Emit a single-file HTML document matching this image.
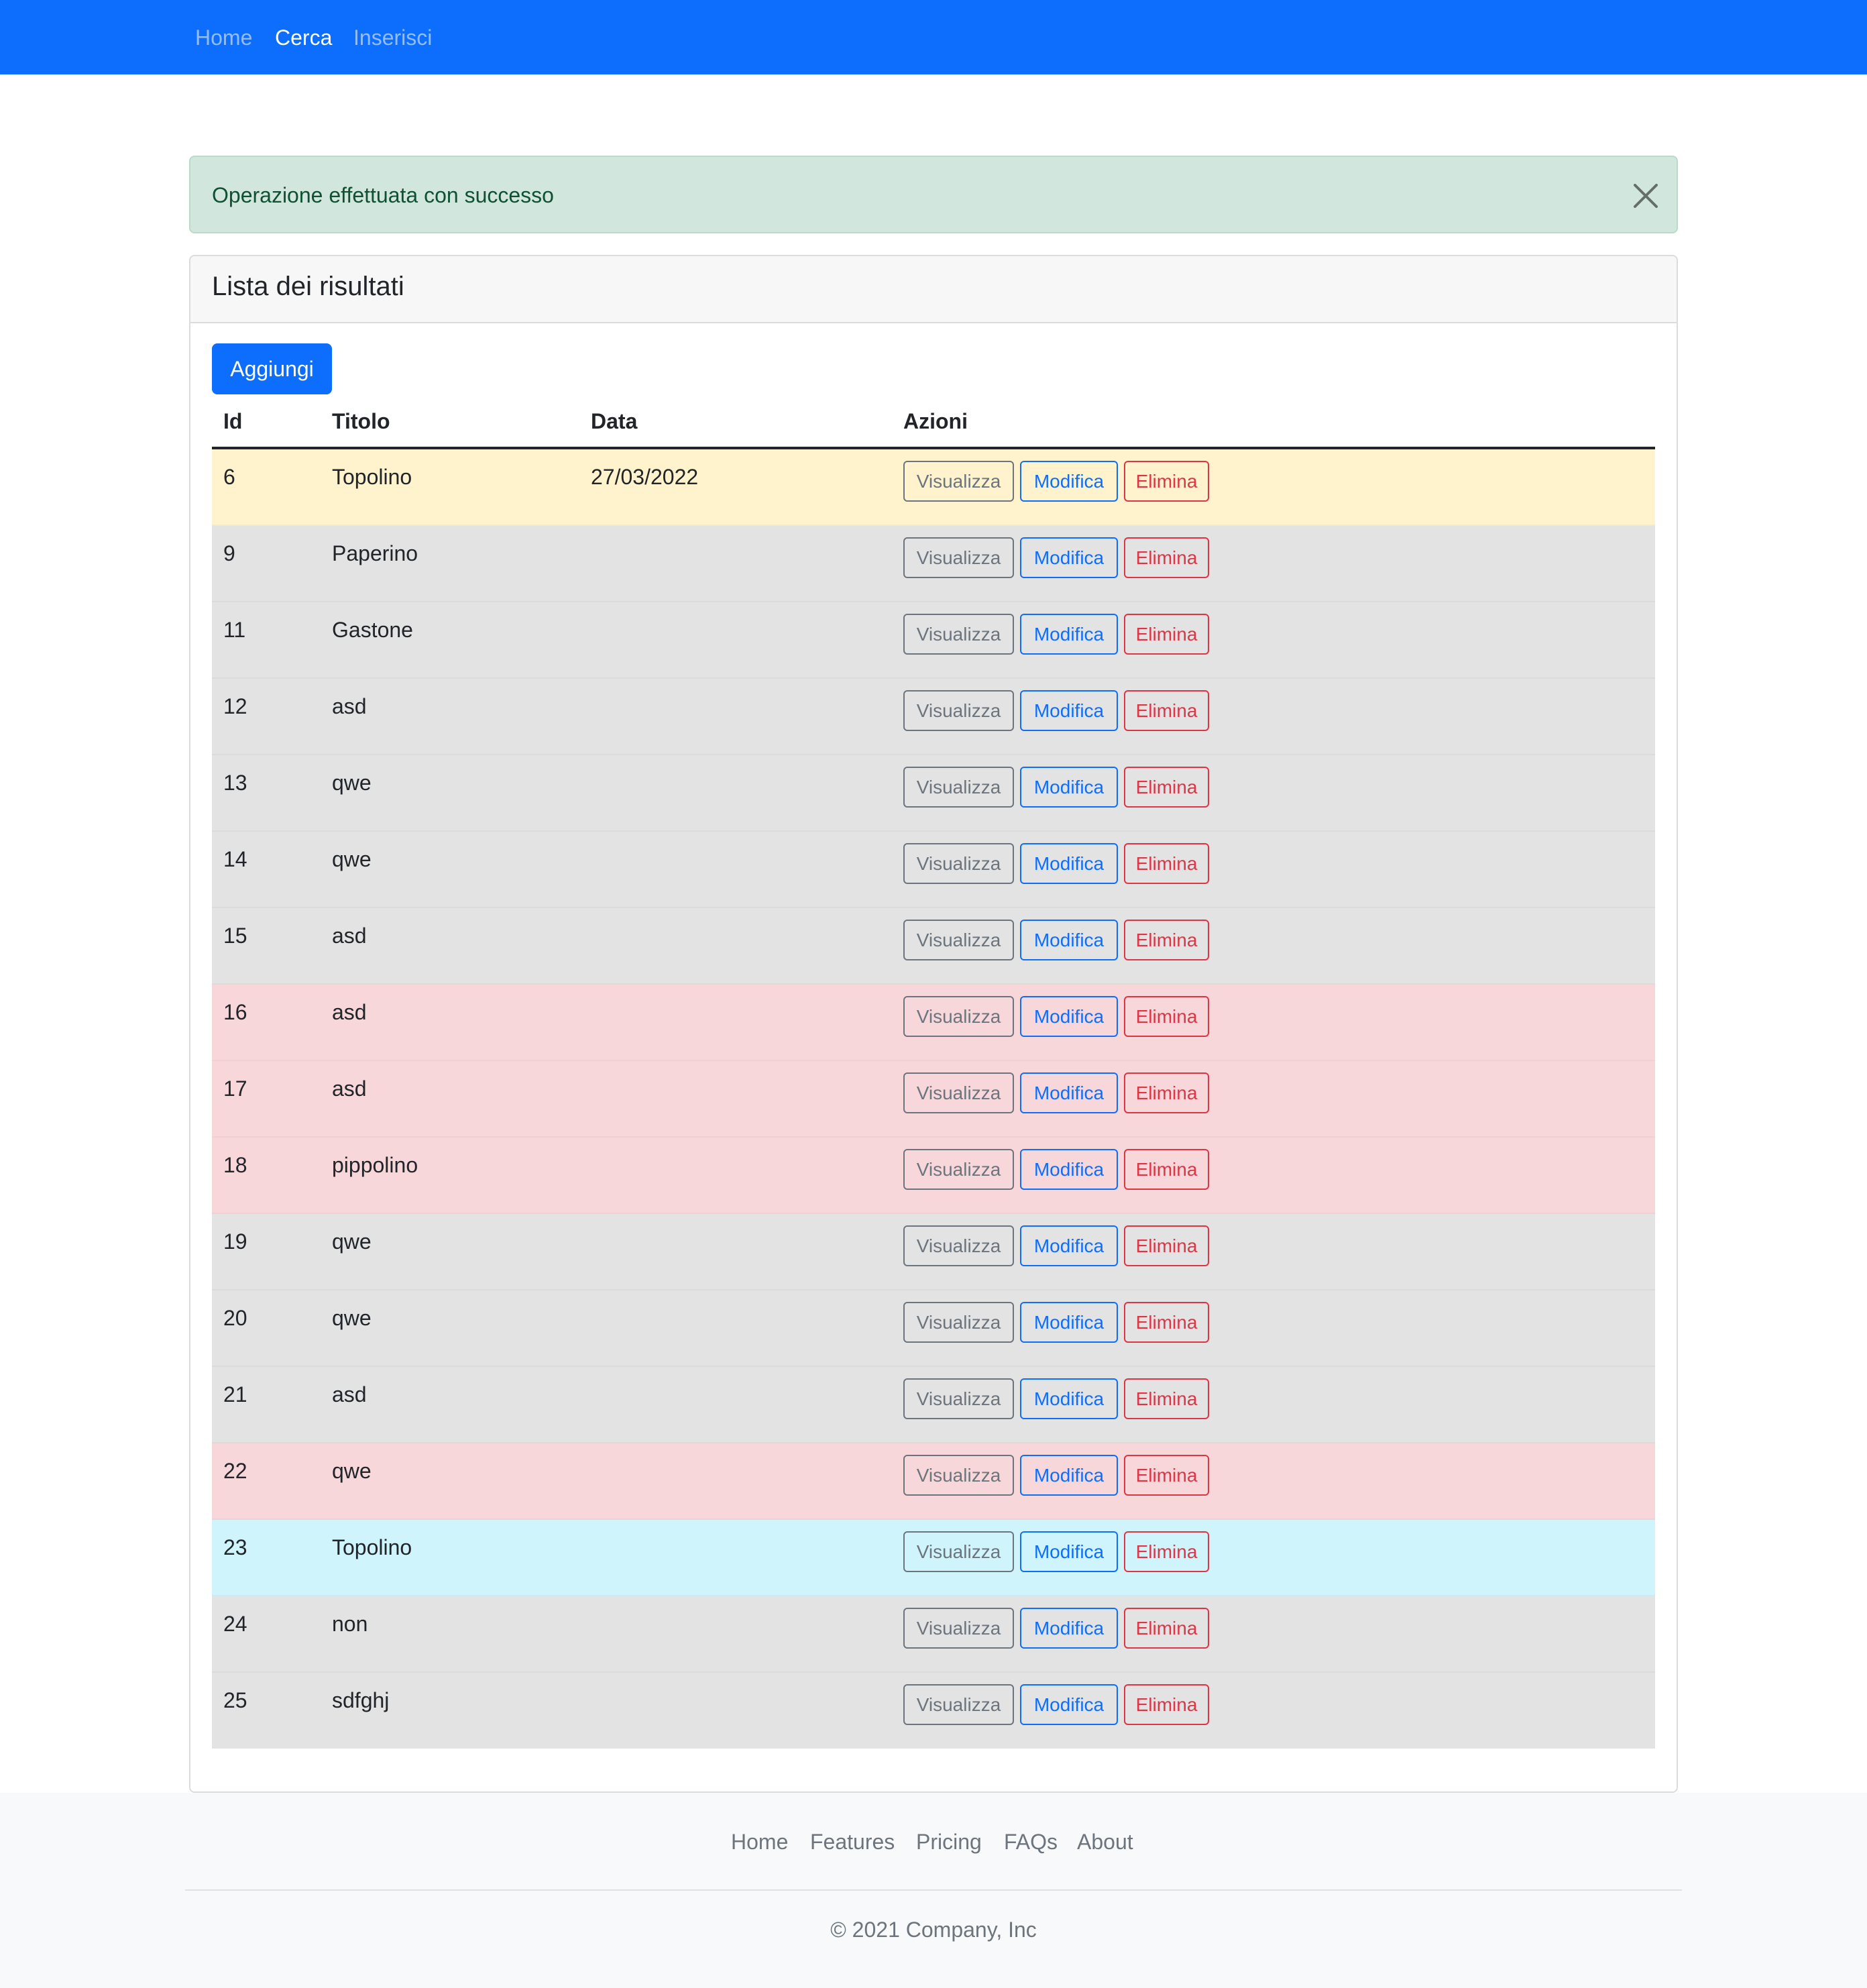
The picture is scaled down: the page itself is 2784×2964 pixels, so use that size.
<!DOCTYPE html>
<html><head><meta charset="utf-8">
<style>
*{box-sizing:border-box;margin:0;padding:0}
html,body{width:2784px;height:2964px;overflow:hidden;background:#fff;font-family:"Liberation Sans",sans-serif;color:#212529}
.nav{position:absolute;left:0;top:0;width:2784px;height:111px;background:#0d6efd}
.nav span{position:absolute;top:36px;font-size:32px;line-height:40px;color:rgba(255,255,255,.55)}
.alert{position:absolute;left:282px;top:232px;width:2220px;height:116px;background:#d1e7dd;border:2px solid #badbcc;border-radius:8px}
.alert .t{position:absolute;left:32px;top:37px;font-size:32px;line-height:40px;color:#0f5132}
.card{position:absolute;left:282px;top:380px;width:2220px;height:2293px;border:2px solid #dcdcdc;border-radius:8px;overflow:hidden}
.card .hd{position:absolute;left:0;top:0;width:100%;height:100px;background:#f7f7f7;border-bottom:2px solid #dcdcdc}
.card .hd div{position:absolute;left:32px;top:21px;font-size:40px;line-height:48px}
.add{position:absolute;left:316px;top:512px;width:179px;height:76px;background:#0d6efd;border-radius:8px;color:#fff;font-size:32px;line-height:76px;text-align:center}
.th{position:absolute;top:608px;font-size:32px;line-height:40px;font-weight:bold}
.hline{position:absolute;left:316px;top:666px;width:2152px;height:4px;background:#212529}
.row{position:absolute;left:316px;width:2152px;height:114px;border-bottom:2px solid rgba(0,0,0,.03)}
.row span{position:absolute;top:21px;font-size:32px;line-height:40px}
.b{position:absolute;top:17px;height:61px;border:2px solid;border-radius:6px;font-size:28px;line-height:57px;text-align:center}
.v{left:1031px;width:165px;border-color:#6c757d;color:#6c757d}
.m{left:1205px;width:146px;border-color:#0d6efd;color:#0d6efd}
.e{left:1360px;width:127px;border-color:#dc3545;color:#dc3545}
.w{background:#fff3cd}.g{background:#e3e3e3}.d{background:#f8d7da}.i{background:#cff4fc}
.foot{position:absolute;left:0;top:2673px;width:2784px;height:291px;background:#f8f9fa}
.fl{position:absolute;top:2726px;font-size:32px;line-height:40px;color:#6c757d}
.fline{position:absolute;left:276px;top:2817px;width:2232px;height:2px;background:#dee2e6}
.copy{position:absolute;left:0;width:2784px;top:2857px;text-align:center;font-size:32px;line-height:40px;color:#6c757d}
</style></head><body>
<div class="nav">
<span style="left:291px">Home</span>
<span style="left:410px;color:#fff">Cerca</span>
<span style="left:527px">Inserisci</span>
</div>
<div class="alert"><div class="t">Operazione effettuata con successo</div>
<svg style="position:absolute;left:2152px;top:40px" width="36" height="36" viewBox="0 0 36 36"><path d="M2 2L34 34M34 2L2 34" stroke="#646e6a" stroke-width="4" stroke-linecap="round"/></svg>
</div>
<div class="card"><div class="hd"><div>Lista dei risultati</div></div></div>
<div class="add">Aggiungi</div>
<div class="th" style="left:333px">Id</div>
<div class="th" style="left:495px">Titolo</div>
<div class="th" style="left:881px">Data</div>
<div class="th" style="left:1347px">Azioni</div>
<div class="hline"></div>

<div class="row w" style="top:670px"><span style="left:17px">6</span><span style="left:179px">Topolino</span><span style="left:565px">27/03/2022</span><div class="b v">Visualizza</div><div class="b m">Modifica</div><div class="b e">Elimina</div></div>
<div class="row g" style="top:784px"><span style="left:17px">9</span><span style="left:179px">Paperino</span><div class="b v">Visualizza</div><div class="b m">Modifica</div><div class="b e">Elimina</div></div>
<div class="row g" style="top:898px"><span style="left:17px">11</span><span style="left:179px">Gastone</span><div class="b v">Visualizza</div><div class="b m">Modifica</div><div class="b e">Elimina</div></div>
<div class="row g" style="top:1012px"><span style="left:17px">12</span><span style="left:179px">asd</span><div class="b v">Visualizza</div><div class="b m">Modifica</div><div class="b e">Elimina</div></div>
<div class="row g" style="top:1126px"><span style="left:17px">13</span><span style="left:179px">qwe</span><div class="b v">Visualizza</div><div class="b m">Modifica</div><div class="b e">Elimina</div></div>
<div class="row g" style="top:1240px"><span style="left:17px">14</span><span style="left:179px">qwe</span><div class="b v">Visualizza</div><div class="b m">Modifica</div><div class="b e">Elimina</div></div>
<div class="row g" style="top:1354px"><span style="left:17px">15</span><span style="left:179px">asd</span><div class="b v">Visualizza</div><div class="b m">Modifica</div><div class="b e">Elimina</div></div>
<div class="row d" style="top:1468px"><span style="left:17px">16</span><span style="left:179px">asd</span><div class="b v">Visualizza</div><div class="b m">Modifica</div><div class="b e">Elimina</div></div>
<div class="row d" style="top:1582px"><span style="left:17px">17</span><span style="left:179px">asd</span><div class="b v">Visualizza</div><div class="b m">Modifica</div><div class="b e">Elimina</div></div>
<div class="row d" style="top:1696px"><span style="left:17px">18</span><span style="left:179px">pippolino</span><div class="b v">Visualizza</div><div class="b m">Modifica</div><div class="b e">Elimina</div></div>
<div class="row g" style="top:1810px"><span style="left:17px">19</span><span style="left:179px">qwe</span><div class="b v">Visualizza</div><div class="b m">Modifica</div><div class="b e">Elimina</div></div>
<div class="row g" style="top:1924px"><span style="left:17px">20</span><span style="left:179px">qwe</span><div class="b v">Visualizza</div><div class="b m">Modifica</div><div class="b e">Elimina</div></div>
<div class="row g" style="top:2038px"><span style="left:17px">21</span><span style="left:179px">asd</span><div class="b v">Visualizza</div><div class="b m">Modifica</div><div class="b e">Elimina</div></div>
<div class="row d" style="top:2152px"><span style="left:17px">22</span><span style="left:179px">qwe</span><div class="b v">Visualizza</div><div class="b m">Modifica</div><div class="b e">Elimina</div></div>
<div class="row i" style="top:2266px"><span style="left:17px">23</span><span style="left:179px">Topolino</span><div class="b v">Visualizza</div><div class="b m">Modifica</div><div class="b e">Elimina</div></div>
<div class="row g" style="top:2380px"><span style="left:17px">24</span><span style="left:179px">non</span><div class="b v">Visualizza</div><div class="b m">Modifica</div><div class="b e">Elimina</div></div>
<div class="row g" style="top:2494px;border-bottom:none;height:113px"><span style="left:17px">25</span><span style="left:179px">sdfghj</span><div class="b v">Visualizza</div><div class="b m">Modifica</div><div class="b e">Elimina</div></div>

<div class="foot"></div>
<div class="fl" style="left:1090px">Home</div>
<div class="fl" style="left:1208px">Features</div>
<div class="fl" style="left:1366px">Pricing</div>
<div class="fl" style="left:1497px">FAQs</div>
<div class="fl" style="left:1606px">About</div>
<div class="fline"></div>
<div class="copy">© 2021 Company, Inc</div>
</body></html>
